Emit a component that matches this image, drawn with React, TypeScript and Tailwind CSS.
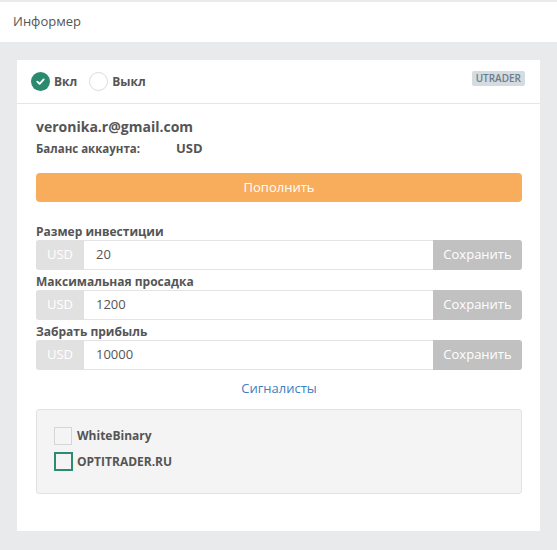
import React from "react";

function InputRow({ label, value }: { label: string; value: string }) {
  return (
    <div>
      <div className="mt-[4px] text-[12px] leading-[16px] font-bold text-[#555]">{label}</div>
      <div className="flex h-[30px]">
        <div className="w-[48px] flex items-center justify-center bg-[#e1e1e1] text-white text-[13px] rounded-l-[3px]">USD</div>
        <div className="flex-1 flex items-center border-y border-[#e4e4e4] bg-white pl-[12px] text-[13px] text-[#555]">{value}</div>
        <div className="w-[89px] flex items-center justify-center bg-[#c1c1c1] text-white text-[13px] rounded-r-[3px]">Сохранить</div>
      </div>
    </div>
  );
}

export default function App() {
  return (
    <div
      className="w-[557px] h-[550px] bg-[#e9eaec] overflow-hidden"
      style={{ fontFamily: '"Open Sans", "Noto Sans", sans-serif' }}
    >
      <div className="h-[2px]" />
      <div className="h-[40px] bg-white flex items-center px-[13px] text-[13px] text-[#555]">Информер</div>
      <div className="pt-[18px] pl-[17px] pr-[17px]">
        <div className="bg-white h-[471px]">
          <div className="h-[44px] border-b border-[#e6e6e6] flex items-center pl-[14px] pr-[15px]">
            <div className="flex items-center">
              <div className="w-[19px] h-[19px] rounded-full bg-[#2b8a6e] flex items-center justify-center">
                <svg width="11" height="11" viewBox="0 0 12 12">
                  <path d="M2.5 6.2 L5 8.5 L9.5 3.8" fill="none" stroke="white" strokeWidth="2" strokeLinecap="round" strokeLinejoin="round" />
                </svg>
              </div>
              <span className="ml-[4px] text-[12px] font-bold text-[#555]">Вкл</span>
            </div>
            <div className="flex items-center ml-[12px]">
              <div className="w-[19px] h-[19px] rounded-full border border-[#dcdcdc] bg-white" />
              <span className="ml-[4px] text-[12px] font-bold text-[#555]">Выкл</span>
            </div>
            <div className="ml-auto mb-[6px] h-[15px] px-[4px] rounded-[2px] bg-[#d4dbe1] flex items-center text-[10px] font-semibold text-[#6e7b88]">UTRADER</div>
          </div>
          <div className="pl-[19px] pr-[18px] pt-[13px]">
            <div className="text-[14px] leading-[20px] font-bold text-[#555]">veronika.r@gmail.com</div>
            <div className="mt-[2px] flex items-center h-[20px] text-[#555] font-bold">
              <span className="text-[11.5px] w-[140px]">Баланс аккаунта:</span>
              <span className="text-[13px]">USD</span>
            </div>
            <div className="mt-[14px] h-[29px] rounded-[4px] bg-[#f7ad5b] flex items-center justify-center text-white text-[13px]">Пополнить</div>
            <div className="mt-[22px]">
              <InputRow label="Размер инвестиции" value="20" />
              <InputRow label="Максимальная просадка" value="1200" />
              <InputRow label="Забрать прибыль" value="10000" />
            </div>
            <div className="mt-[9px] h-[18px] leading-[18px] text-center text-[13px] text-[#3d80c2]">Сигналисты</div>
            <div className="mt-[12px] h-[85px] rounded-[3px] border border-[#e2e2e2] bg-[#f4f4f4] pt-[17px] pl-[17px]">
              <div className="flex items-center">
                <div className="w-[18px] h-[18px] border border-[#d6d6d6] bg-[#f4f4f4]" />
                <span className="ml-[5px] text-[12px] font-bold text-[#555]">WhiteBinary</span>
              </div>
              <div className="flex items-center mt-[7px]">
                <div className="w-[19px] h-[19px] border-2 border-[#2e8a72] bg-[#f4f4f4]" />
                <span className="ml-[4px] text-[12px] font-bold text-[#555]">OPTITRADER.RU</span>
              </div>
            </div>
          </div>
        </div>
      </div>
    </div>
  );
}
